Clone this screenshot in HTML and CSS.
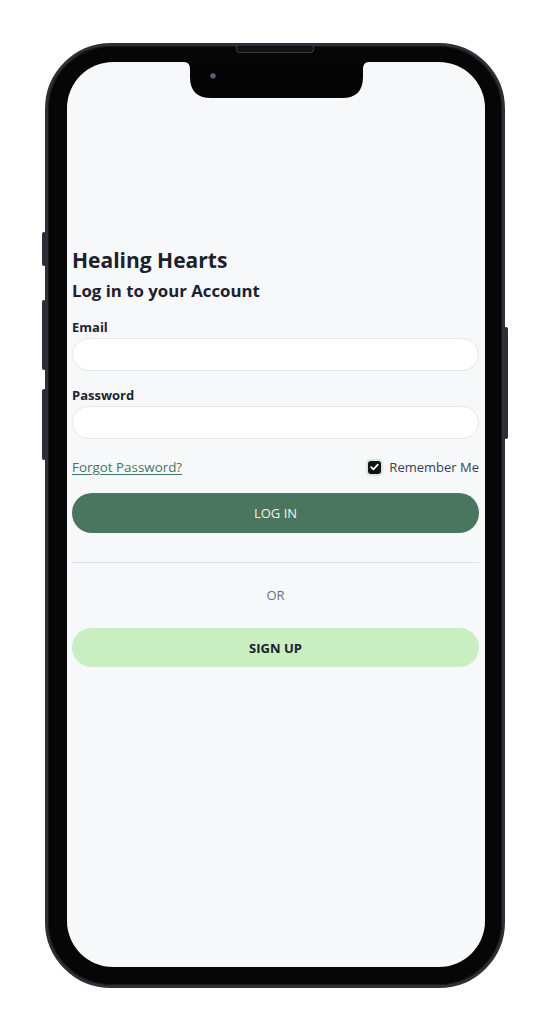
FILE: index.html
```html
<!DOCTYPE html>
<html lang="en">
<head>
<meta charset="utf-8">
<title>Healing Hearts – Log in</title>
<link rel="stylesheet" href="styles.css">
</head>
<body>
<div class="stage">
  <div class="device">
    <span class="side side-silent"></span>
    <span class="side side-volup"></span>
    <span class="side side-voldown"></span>
    <span class="side side-power"></span>
    <span class="speaker"></span>
    <div class="phone">
      <div class="screen">
        <svg class="notch" width="185" height="36" viewBox="0 0 185 36" aria-hidden="true">
          <path d="M0 0 H185 Q179 0 179 7 V15 Q179 36 158 36 H27 Q6 36 6 15 V7 Q6 0 0 0 Z" fill="#050505"/>
        </svg>
        <span class="camera"></span>
        <main class="login">
          <h1 class="brand">Healing Hearts</h1>
          <h2 class="subtitle">Log in to your Account</h2>
          <form class="form">
            <div class="field">
              <label class="label" for="email">Email</label>
              <input class="input" id="email" type="email">
            </div>
            <div class="field">
              <label class="label" for="password">Password</label>
              <input class="input" id="password" type="password">
            </div>
            <div class="row">
              <a class="forgot" href="#">Forgot Password?</a>
              <label class="remember">
                <span class="check"><svg width="9" height="8" viewBox="0 0 9 8" aria-hidden="true"><path d="M1.2 4.2 L3.4 6.3 L7.8 1.6" fill="none" stroke="#fff" stroke-width="1.7" stroke-linecap="round" stroke-linejoin="round"/></svg></span>
                <span class="remember-text">Remember Me</span>
              </label>
            </div>
            <button class="btn btn-login" type="button">LOG IN</button>
          </form>
          <hr class="divider">
          <p class="or">OR</p>
          <button class="btn btn-signup" type="button">SIGN UP</button>
        </main>
      </div>
    </div>
  </div>
</div>
</body>
</html>
```
FILE: styles.css
```css
* { box-sizing: border-box; }

body {
  margin: 0;
  background: #ffffff;
  font-family: "Open Sans", "Noto Sans", "Liberation Sans", sans-serif;
  color: #1c212b;
}

.stage {
  padding: 43px 0 0 45px;
}

.device {
  position: relative;
  width: 460px;
  height: 945px;
}

.phone {
  width: 460px;
  height: 945px;
  border: 3px solid #2d3036;
  border-radius: 66px;
  background: #060606;
  padding: 16px 17px 18px 19px;
  box-shadow: inset 0 0 0 1px #16181c;
}

.side {
  position: absolute;
  width: 4px;
  background: #2b2e34;
  border-radius: 2px;
}
.side-silent { left: -3px; top: 189px; height: 34px; }
.side-volup { left: -3px; top: 257px; height: 70px; }
.side-voldown { left: -3px; top: 346px; height: 71px; }
.side-power { left: 459px; top: 284px; height: 112px; }

.speaker {
  position: absolute;
  left: 191px;
  top: 3px;
  width: 78px;
  height: 7px;
  background: #111215;
  border: 1px solid #3a3d44;
  border-top: none;
  border-radius: 0 0 4px 4px;
  z-index: 2;
}

.screen {
  position: relative;
  height: 100%;
  background: #f7f8fa;
  border-radius: 46px;
  overflow: hidden;
  padding: 184px 6px 0 5px;
}

.notch {
  position: absolute;
  left: 117px;
  top: 0;
  display: block;
}

.camera {
  position: absolute;
  left: 143px;
  top: 11px;
  width: 6px;
  height: 6px;
  border-radius: 50%;
  background: radial-gradient(circle at 50% 45%, #5a6577 0 35%, #2a3240 70%);
}

.login {
  display: flex;
  flex-direction: column;
}

.brand {
  margin: 0;
  font-size: 21px;
  line-height: 28px;
  font-weight: 700;
  color: #1c212b;
}

.subtitle {
  margin: 6px 0 0;
  font-size: 16.8px;
  line-height: 22px;
  font-weight: 700;
  color: #1c212b;
}

.form {
  display: flex;
  flex-direction: column;
  margin-top: 16px;
}

.field {
  display: flex;
  flex-direction: column;
  gap: 2px;
}
.field + .field { margin-top: 15px; }

.label {
  font-size: 13px;
  line-height: 18px;
  font-weight: 700;
  color: #1f2430;
}

.input {
  display: block;
  width: 100%;
  height: 33px;
  border: 1px solid #e6e7ea;
  border-radius: 999px;
  background: #ffffff;
  padding: 0 14px;
  font: inherit;
  outline: none;
}

.row {
  display: flex;
  justify-content: space-between;
  align-items: center;
  margin-top: 19px;
  height: 18px;
  font-size: 13px;
  line-height: 18px;
}

.forgot {
  color: #4a7560;
  font-size: 13.4px;
  text-decoration: underline;
  text-underline-offset: 2px;
}

.remember {
  display: flex;
  align-items: center;
  gap: 8px;
  color: #374151;
}

.check {
  display: flex;
  align-items: center;
  justify-content: center;
  width: 13px;
  height: 13px;
  border-radius: 3px;
  background: #111111;
  box-shadow: 0 0 0 2px #d3eadb, 0 0 3px 2px #e2f2e7;
}

.btn {
  display: flex;
  align-items: center;
  justify-content: center;
  width: 100%;
  border: none;
  border-radius: 999px;
  font-family: inherit;
  font-size: 13px;
  cursor: pointer;
}

.btn-login {
  margin-top: 17px;
  height: 40px;
  background: #4a755e;
  color: #eef3f0;
  font-weight: 400;
}

.divider {
  margin: 29px 0 0;
  border: none;
  height: 1px;
  background: #dfe0e3;
}

.or {
  margin: 23px 0 0;
  font-size: 13px;
  line-height: 18px;
  text-align: center;
  color: #6b7078;
}

.btn-signup {
  margin-top: 24px;
  height: 39px;
  background: #c9eec1;
  color: #1c212b;
  font-weight: 700;
}
```
